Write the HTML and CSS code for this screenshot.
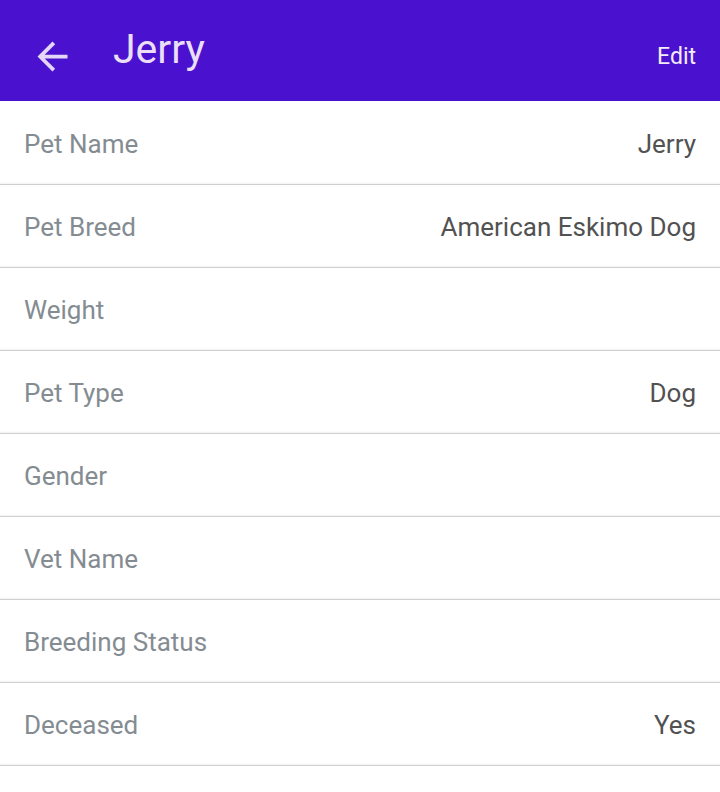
FILE: index.html
```html
<!DOCTYPE html>
<html>
<head>
<meta charset="utf-8">
<link rel="stylesheet" href="styles.css">
</head>
<body>
<header class="appbar">
  <svg class="back" viewBox="0 0 24 24" width="45" height="45"><path d="M20 11H7.83l5.59-5.59L12 4l-8 8 8 8 1.41-1.41L7.83 13H20v-2z" fill="currentColor"/></svg>
  <h1 class="title">Jerry</h1>
  <span class="edit">Edit</span>
</header>
<main class="list">
  <div class="row"><span class="label">Pet Name</span><span class="value">Jerry</span></div>
  <div class="row"><span class="label">Pet Breed</span><span class="value">American Eskimo Dog</span></div>
  <div class="row"><span class="label">Weight</span><span class="value"></span></div>
  <div class="row"><span class="label">Pet Type</span><span class="value">Dog</span></div>
  <div class="row"><span class="label">Gender</span><span class="value"></span></div>
  <div class="row"><span class="label">Vet Name</span><span class="value"></span></div>
  <div class="row"><span class="label">Breeding Status</span><span class="value"></span></div>
  <div class="row"><span class="label">Deceased</span><span class="value">Yes</span></div>
</main>
</body>
</html>
```
FILE: styles.css
```css
html, body {
  margin: 0;
  padding: 0;
  background: #ffffff;
  font-family: Roboto, "Noto Sans", sans-serif;
}
.appbar {
  height: 101px;
  box-sizing: border-box;
  background: #4a12cf;
  display: flex;
  align-items: center;
  padding: 12px 24px 0 30px;
  color: #eadff7;
}
.back {
  flex: none;
  color: #e4d6f6;
}
.title {
  margin: 0 0 16px 38px;
  font-size: 41px;
  font-weight: 400;
  flex: 1;
  letter-spacing: 0;
}
.edit {
  font-size: 23px;
  color: #f3ecfb;
}
.list {
  padding-top: 1px;
}
.row {
  height: 83px;
  box-sizing: border-box;
  display: flex;
  align-items: center;
  justify-content: space-between;
  padding: 2px 24px 0;
  border-bottom: 1px solid #cfcfcf;
  box-shadow: inset 0 -3px 2px -2px #f2f2f2;
  font-size: 26px;
}
.label {
  color: #848c92;
}
.value {
  color: #525252;
}
```
